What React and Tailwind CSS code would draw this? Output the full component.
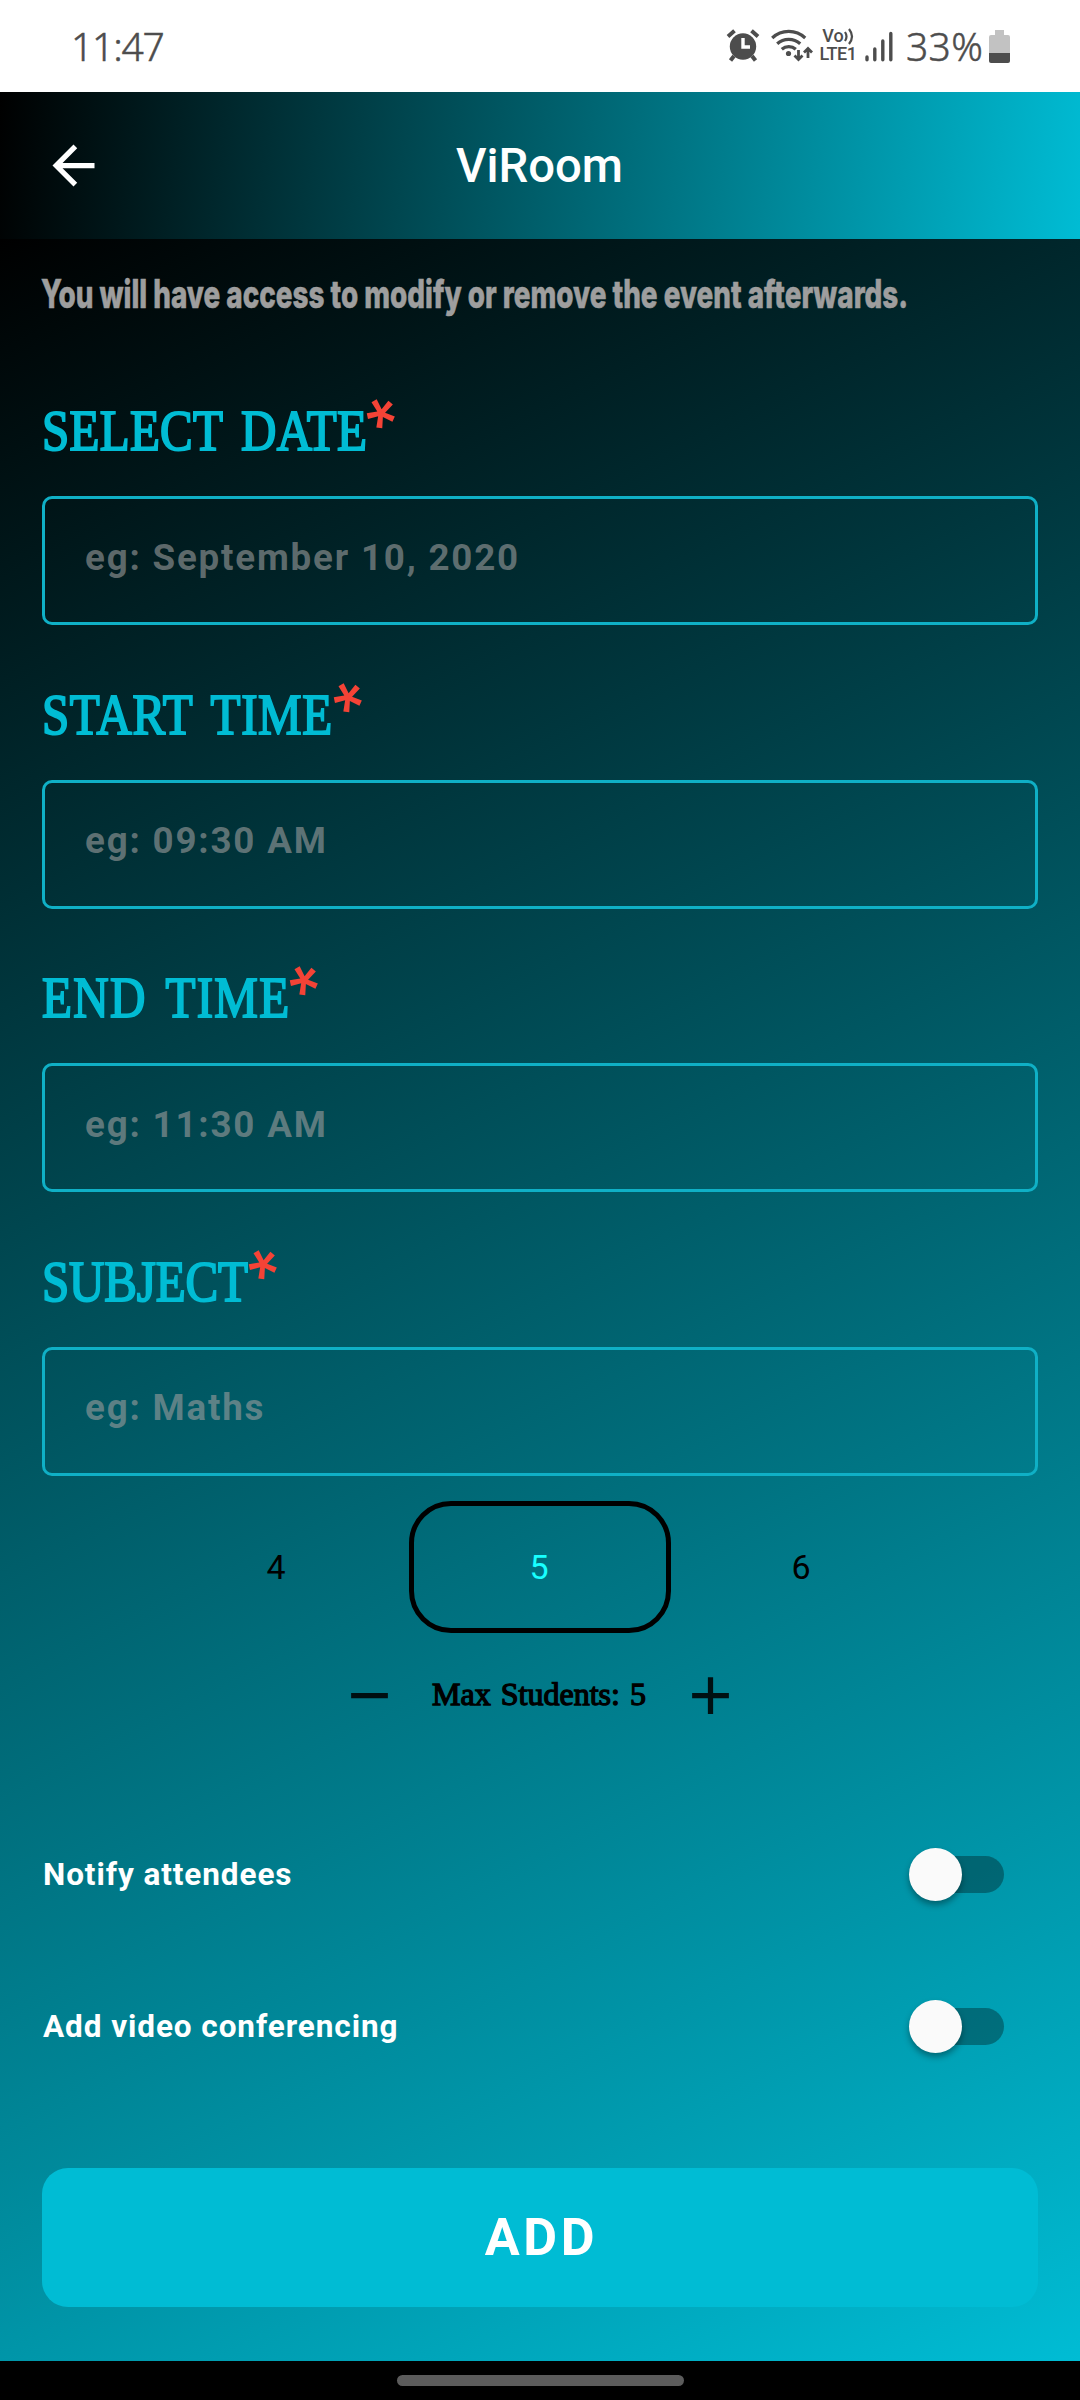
import React from "react";

const fields = [
  { label: "SELECT DATE", hint: "eg: September 10, 2020", width: "w-[324px]", spacing: "tracking-[0.300px]" },
  { label: "START TIME", hint: "eg: 09:30 AM", width: "w-[291px]", spacing: "tracking-[0.700px]" },
  { label: "END TIME", hint: "eg: 11:30 AM", width: "w-[247px]", spacing: "tracking-[1.500px]" },
  { label: "SUBJECT", hint: "eg: Maths", width: "w-[206px]", spacing: "tracking-[-0.200px]" },
];

function StatusBar() {
  return (
    <div className="flex h-[92px] items-center bg-white pl-[71px] pr-[70px] text-[#4d4d4d]">
      <span className="pb-[2px] font-['Noto_Sans'] text-[39px] leading-none font-light tracking-[-1.2px] [-webkit-text-stroke:0.5px_#4d4d4d]">11:47</span>
      <div className="ml-auto flex items-center">
        <svg width="34" height="34" viewBox="0 0 34 34" fill="none" stroke="currentColor">
          <circle cx="17" cy="17.500" r="13.200" fill="currentColor" stroke="none" />
          <path d="M2 7.500 8.500 1.800M32 7.500 25.500 1.800" strokeWidth="4" />
          <path d="M8 27 4.500 31.500M26 27l3.500 4.500" strokeWidth="4" />
          <path d="M17 9v9h7" stroke="#fff" strokeWidth="3.400" />
        </svg>
        <svg className="ml-[11px]" width="42" height="34" viewBox="0 0 42 34" fill="none" stroke="currentColor" strokeWidth="3.200">
          <path d="M1.200 9a24 24 0 0 1 33 0M6.200 14.800a17 17 0 0 1 23 0M10.800 20.200a10.500 10.500 0 0 1 14 0" />
          <circle cx="17.500" cy="24.500" r="2.600" fill="currentColor" stroke="none" />
          <path d="M27.500 21v9.500M23.500 26.500l4 4 4-4M37 29v-9.500M33 23.500l4-4 4 4" strokeWidth="2.800" />
        </svg>
        <div className="ml-[5px] flex w-[40px] flex-col items-center pb-[2px] font-['Roboto'] font-medium">
          <span className="flex h-[18px] items-center text-[18px] leading-[18px]">
            Vo
            <svg className="shrink-0" width="10" height="17" viewBox="0 0 10 17" fill="none" stroke="currentColor" strokeWidth="2.200">
              <path d="M1 4q3 4.500 0 9M5 1q6 7.500 0 15" />
            </svg>
          </span>
          <span className="h-[18px] text-[18px] leading-[18px] tracking-[-0.5px]">LTE1</span>
        </div>
        <svg className="ml-[7px]" width="28" height="31" viewBox="0 0 28 31" fill="none" stroke="currentColor" strokeWidth="3.400" strokeLinecap="round">
          <path d="M2 26v2.800M9.800 18v10.800M17.800 10v18.800M25.800 2.500v26.300" />
        </svg>
        <span className="ml-[13px] w-[80px] pb-[2px] font-['Noto_Sans'] text-[39px] leading-none font-light tracking-[0.3px] whitespace-nowrap [-webkit-text-stroke:0.5px_#4d4d4d]">33%</span>
        <svg className="ml-[3px]" width="21" height="33" viewBox="0 0 21 33">
          <path d="M6 0h9v5h4a2 2 0 0 1 2 2v16H0V7a2 2 0 0 1 2-2h4z" fill="#c2c2c2" />
          <path d="M0 23h21v8a2 2 0 0 1-2 2H2a2 2 0 0 1-2-2z" fill="#4d4d4d" />
        </svg>
      </div>
    </div>
  );
}

function Header() {
  return (
    <header className="grid h-[147px] grid-cols-[105px_1fr_105px] items-center bg-[linear-gradient(97.75deg,#000_0%,#00bcd4_100%)] text-white">
      <svg className="ml-[42px]" width="63" height="63" viewBox="0 0 24 24" fill="currentColor">
        <path d="M20 11H7.830l5.590-5.590L12 4l-8 8 8 8 1.410-1.410L7.830 13H20v-2z" />
      </svg>
      <h1 className="pt-[2px] pr-px text-center text-[47.250px] leading-none font-medium">ViRoom</h1>
    </header>
  );
}

function Field({ label, hint, width, spacing }) {
  return (
    <div className="mb-[59.500px]">
      <div className="flex h-[60px]">
        <div className={width}>
          <span className={`${spacing} inline-block origin-left scale-x-[0.875] font-['Liberation_Serif'] text-[56px] leading-[60px] [word-spacing:7px] whitespace-nowrap text-[#00bcd4] [-webkit-text-stroke:2px_#00bcd4]`}>
            {label}
          </span>
        </div>
        <span className="flex h-[58px] w-[32px] -translate-y-[26px] rotate-[186deg] justify-center font-['Roboto'] text-[66px] leading-[60px] font-semibold text-[#f44336]">*</span>
      </div>
      <div className="mt-[35px] flex h-[129px] items-center rounded-[10px] border-3 border-[#0fb0c6] pb-[5px] pl-[40px] text-[36.750px] leading-none font-bold tracking-[1.800px] text-[#9e9e9e]/60">
        {hint}
      </div>
    </div>
  );
}

function ToggleRow({ label }) {
  return (
    <div className="flex h-[126px] items-center justify-between pr-[34px]">
      <span className="pt-[2px] pl-px text-[31.500px] leading-none font-bold tracking-[0.920px] text-white">{label}</span>
      <div className="flex h-[37px] w-[87px] items-center rounded-full bg-black/32">
        <div className="-ml-2 size-[53px] shrink-0 rounded-full bg-[#fafafa] shadow-[0_4px_6px_rgba(0,0,0,0.35)]" />
      </div>
    </div>
  );
}

export default function App() {
  return (
    <div className="flex h-[2400px] w-[1080px] flex-col overflow-hidden bg-black font-['Roboto',sans-serif]">
      <StatusBar />
      <Header />
      <main className="h-[2122px] bg-[linear-gradient(153deg,#000_0%,#00bcd4_100%)] px-[42px] pt-[34px]">
        <p className="-ml-px h-[40px] origin-left scale-x-[0.714] font-['Inter'] text-[39px] leading-[41px] font-extrabold whitespace-nowrap text-[#9e9e9e] [-webkit-text-stroke:0.6px_#9e9e9e]">
          You will have access to modify or remove the event afterwards.
        </p>
        <div className="mt-[88px]">
          {fields.map((f) => (
            <Field key={f.label} {...f} />
          ))}
        </div>
        <div className="-mt-[34px] grid h-[132px] grid-cols-[262px_262px_262px] items-center justify-center text-center text-[34px] text-black">
          <span className="pr-[4px]">4</span>
          <span className="flex h-full items-center justify-center rounded-[42px] border-[5px] border-black pr-[2px] text-[#18ffff]">5</span>
          <span className="pr-[2px]">6</span>
        </div>
        <div className="mt-[31px] flex h-[63px] items-center justify-center text-black/87">
          <svg width="63" height="63" viewBox="0 0 24 24" fill="currentColor">
            <path d="M5 11h14v2H5z" />
          </svg>
          <span className="w-[278px] pr-[2px] pb-[4px] text-center font-['Liberation_Serif'] text-[32px] leading-none [word-spacing:2px] text-black [-webkit-text-stroke:1.3px_#000]">
            Max Students: 5
          </span>
          <svg width="63" height="63" viewBox="0 0 24 24" fill="currentColor">
            <path d="M19 13h-6v6h-2v-6H5v-2h6V5h2v6h6v2z" />
          </svg>
        </div>
        <div className="mt-[84px] flex flex-col gap-[26px]">
          <ToggleRow label="Notify attendees" />
          <ToggleRow label="Add video conferencing" />
        </div>
        <button className="mt-[79px] flex h-[139px] w-full items-center justify-center rounded-[26px] bg-[#00bcd4] pl-[3px] text-[52px] leading-none font-bold tracking-[3.600px] text-white">
          ADD
        </button>
      </main>
      <div className="flex flex-1 justify-center bg-black pt-[14px]">
        <div className="h-[11px] w-[287px] rounded-full bg-[#5c5c5c]" />
      </div>
    </div>
  );
}
